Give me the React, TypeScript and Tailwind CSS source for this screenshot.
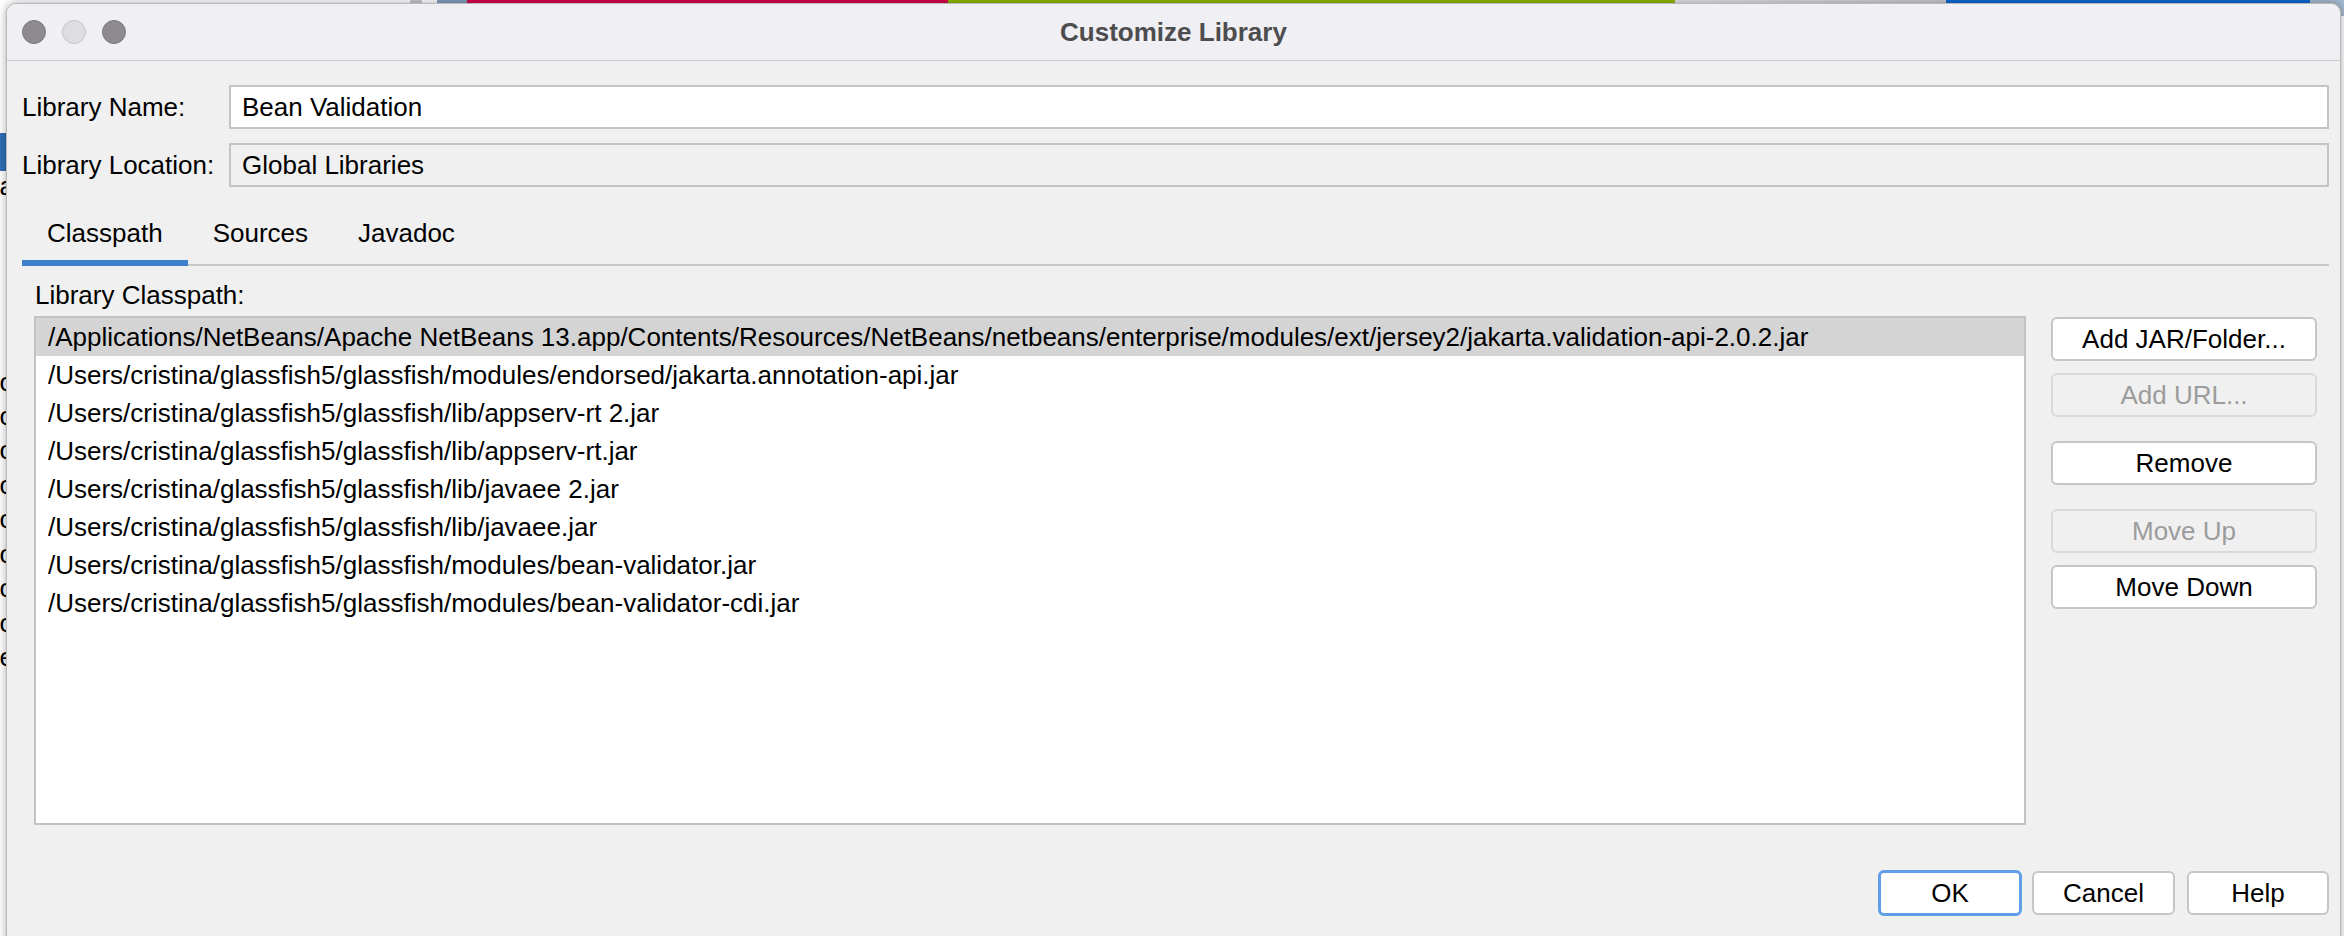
const classpath = [
  "/Applications/NetBeans/Apache NetBeans 13.app/Contents/Resources/NetBeans/netbeans/enterprise/modules/ext/jersey2/jakarta.validation-api-2.0.2.jar",
  "/Users/cristina/glassfish5/glassfish/modules/endorsed/jakarta.annotation-api.jar",
  "/Users/cristina/glassfish5/glassfish/lib/appserv-rt 2.jar",
  "/Users/cristina/glassfish5/glassfish/lib/appserv-rt.jar",
  "/Users/cristina/glassfish5/glassfish/lib/javaee 2.jar",
  "/Users/cristina/glassfish5/glassfish/lib/javaee.jar",
  "/Users/cristina/glassfish5/glassfish/modules/bean-validator.jar",
  "/Users/cristina/glassfish5/glassfish/modules/bean-validator-cdi.jar",
];

// glyph ends of the window underneath, peeking out on the left
const behind = [
  { ch: "r", h: "h-[34px] leading-[34px]", sel: false },
  { ch: "t", h: "h-[38px] leading-[38px]", sel: true },
  { ch: "a", h: "h-[30px] leading-[30px]", sel: false },
  { ch: "j", h: "h-[30px] leading-[30px]", sel: false },
  { ch: "r", h: "h-[134px] leading-[30px]", sel: false },
  { ch: "o", h: "h-[34px] leading-[34px]", sel: false },
  { ch: "o", h: "h-[34px] leading-[34px]", sel: false },
  { ch: "o", h: "h-[35px] leading-[35px]", sel: false },
  { ch: "o", h: "h-[34px] leading-[34px]", sel: false },
  { ch: "o", h: "h-[35px] leading-[35px]", sel: false },
  { ch: "o", h: "h-[34px] leading-[34px]", sel: false },
  { ch: "o", h: "h-[35px] leading-[35px]", sel: false },
  { ch: "o", h: "h-[34px] leading-[34px]", sel: false },
  { ch: "e", h: "h-[34px] leading-[34px]", sel: false },
];

function Button({
  label,
  disabled = false,
  className = "",
}: {
  label: string;
  disabled?: boolean;
  className?: string;
}) {
  return (
    <div
      className={`flex h-[44px] items-center justify-center rounded-[6px] border-2 ${
        disabled
          ? "border-[#d9d9d9] bg-[#f0f0f0] text-[#9c9c9c]"
          : "border-[#c6c6c6] bg-white text-black"
      } ${className}`}
    >
      {label}
    </div>
  );
}

export default function App() {
  return (
    <div className="relative h-[936px] w-[2344px] overflow-hidden bg-white font-['Liberation_Sans',Arial,sans-serif] text-[26px] leading-[30px]">
      {/* window underneath the dialog */}
      <div className="flex h-[16px]">
        <div className="w-[410px] bg-white" />
        <div className="w-[12px] bg-[#c9c9c9]" />
        <div className="w-[15px] bg-white" />
        <div className="w-[30px] bg-[#7f9fc0]" />
        <div className="w-[481px] bg-[#d6004b]" />
        <div className="w-[727px] bg-[#8dba00]" />
        <div className="w-[271px] bg-gradient-to-r from-[#e4e4e4] to-[#c9c9c9]" />
        <div className="w-[364px] bg-[#0a6ad2]" />
        <div className="flex-1 bg-[#a4b9cf]" />
      </div>
      <div className="flex w-[6px] flex-col items-end overflow-hidden pt-[83px] text-black">
        {behind.map((b, i) => (
          <div
            key={i}
            className={`flex w-full shrink-0 items-start justify-end overflow-hidden ${b.h} ${
              b.sel ? "bg-[#2f6eb5] text-white" : ""
            }`}
          >
            <span className="-mr-[8px]">{b.ch}</span>
          </div>
        ))}
      </div>

      {/* dialog */}
      <div className="absolute left-[6px] top-[3px] flex h-[945px] w-[2335px] flex-col overflow-hidden rounded-[10px] border border-[#b9b9b9] bg-[#f0f0f0] shadow-[0_0_8px_rgba(0,0,0,0.35)]">
        <div className="relative flex h-[57px] shrink-0 items-center justify-center border-b border-[#cbcbcb] bg-[#f0eff4]">
          <div className="absolute left-[15px] top-0 flex h-[56px] items-center gap-[16px]">
            <div className="h-[24px] w-[24px] rounded-full border border-[#7d7b80] bg-[#8d8b90]" />
            <div className="h-[24px] w-[24px] rounded-full border border-[#c6c5c9] bg-[#dedde1]" />
            <div className="h-[24px] w-[24px] rounded-full border border-[#7d7b80] bg-[#8d8b90]" />
          </div>
          <span className="font-bold text-[#4d4d4f]">Customize Library</span>
        </div>

        <div className="flex flex-1 flex-col pl-[15px] pr-[11px] pt-[24px] text-black">
          <div className="flex items-center">
            <div className="w-[207px] shrink-0">Library Name:</div>
            <div className="flex h-[44px] flex-1 items-center border-2 border-[#c4c4c4] bg-white pl-[11px]">
              Bean Validation
            </div>
          </div>
          <div className="mt-[14px] flex items-center">
            <div className="w-[207px] shrink-0">Library Location:</div>
            <div className="flex h-[44px] flex-1 items-center border-2 border-[#c4c4c4] bg-[#f0f0f0] pl-[11px]">
              Global Libraries
            </div>
          </div>

          <div className="mt-[18px] flex border-b-2 border-[#c8c8c8]">
            <div className="-mb-[2px] flex h-[61px] items-center border-b-[6px] border-[#3d80cc] px-[25px]">
              Classpath
            </div>
            <div className="-mb-[2px] flex h-[61px] items-center border-b-[6px] border-transparent px-[25px]">
              Sources
            </div>
            <div className="-mb-[2px] flex h-[61px] items-center border-b-[6px] border-transparent px-[25px]">
              Javadoc
            </div>
          </div>

          <div className="flex flex-col px-[12px]">
            <div className="mt-[14px] pl-[1px]">Library Classpath:</div>
            <div className="mt-[6px] flex gap-[25px]">
              <div className="flex h-[509px] flex-1 flex-col border-2 border-[#c2c2c2] bg-white">
                {classpath.map((p, i) => (
                  <div
                    key={p}
                    className={`flex h-[38px] shrink-0 items-center whitespace-nowrap pl-[12px] ${
                      i === 0 ? "bg-[#d4d4d4]" : ""
                    }`}
                  >
                    {p}
                  </div>
                ))}
              </div>
              <div className="flex w-[266px] flex-col pt-[1px]">
                <Button label="Add JAR/Folder..." />
                <Button label="Add URL..." disabled className="mt-[12px]" />
                <Button label="Remove" className="mt-[24px]" />
                <Button label="Move Up" disabled className="mt-[24px]" />
                <Button label="Move Down" className="mt-[12px]" />
              </div>
            </div>
          </div>

          <div className="mt-[45px] flex items-center justify-end">
            <div className="flex h-[46px] w-[144px] items-center justify-center rounded-[6px] border-[3px] border-[#5e9fe8] bg-white">
              OK
            </div>
            <Button label="Cancel" className="ml-[10px] w-[143px]" />
            <Button label="Help" className="ml-[12px] w-[142px]" />
          </div>
        </div>
      </div>
    </div>
  );
}
